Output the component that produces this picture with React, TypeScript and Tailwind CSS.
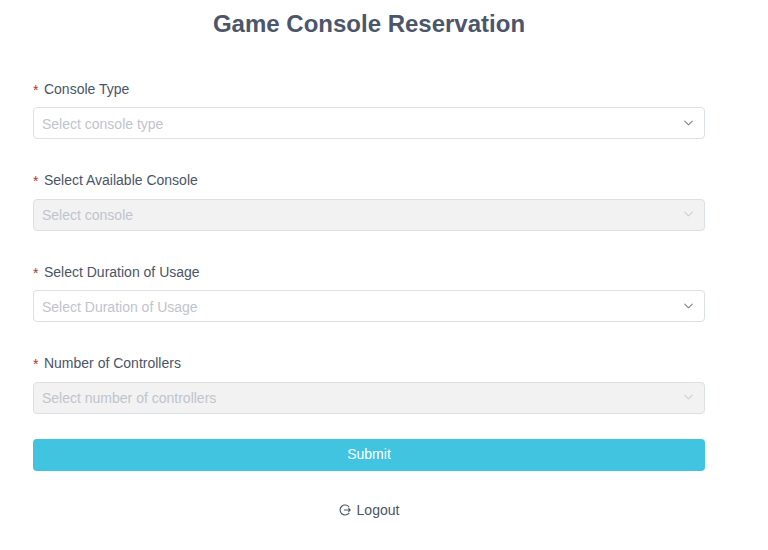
import { ChevronDown } from "lucide-react";

const fields = [
	{ label: "Console Type", placeholder: "Select console type", disabled: false },
	{ label: "Select Available Console", placeholder: "Select console", disabled: true },
	{ label: "Select Duration of Usage", placeholder: "Select Duration of Usage", disabled: false },
	{ label: "Number of Controllers", placeholder: "Select number of controllers", disabled: true },
];

function Field({ label, placeholder, disabled }: { label: string; placeholder: string; disabled: boolean }) {
	return (
		<div className="flex flex-col">
			<div className="flex h-[22px] items-center text-[14px] text-[#4a5568]">
				<span className="mr-[5.5px] translate-y-[1px] text-[14px] text-[#b8321f]">*</span>
				{label}
			</div>
			<div
				className={`mt-[7px] flex h-[32px] items-center justify-between rounded-[4px] border border-[#dcdfe6] pl-[8px] pr-[8px] text-[14px] text-[#c0c4cc] ${disabled ? "bg-[#f2f2f2]" : "bg-white"}`}
			>
				<span className="translate-y-[1.4px]">{placeholder}</span>
				<ChevronDown size={15} strokeWidth={1.8} className={`-translate-y-[0.6px] ${disabled ? "text-[#cfcfcf]" : "text-[#7d8187]"}`} />
			</div>
		</div>
	);
}

export default function App() {
	return (
		<div className="h-[550px] w-[768px] overflow-hidden bg-white font-['Liberation_Sans',Arial,sans-serif]">
			<div className="ml-[33px] w-[672px] pt-[10px]">
				<h1 className="text-center text-[24px] leading-[28px] font-bold text-[#4c566a]">Game Console Reservation</h1>
				<div className="mt-[40px] flex flex-col gap-[30.67px]">
					{fields.map((f) => (
						<Field key={f.label} {...f} />
					))}
				</div>
				<button className="mt-[25px] flex h-[32px] w-full items-center justify-center rounded-[4px] bg-[#40c4e0] text-[14px] text-white">
					Submit
				</button>
				<div className="mt-[29px] flex items-center justify-center gap-[6px] text-[14px] text-[#4a5568]">
					<svg width="12" height="12" viewBox="0 0 12 12" fill="none" stroke="currentColor" strokeWidth="1.1">
						<path d="M10.2 3.2A5 5 0 1 0 10.2 8.8" />
						<path d="M5 6h6.2M9.4 4.2 11.2 6 9.4 7.8" />
					</svg>
					Logout
				</div>
			</div>
		</div>
	);
}
